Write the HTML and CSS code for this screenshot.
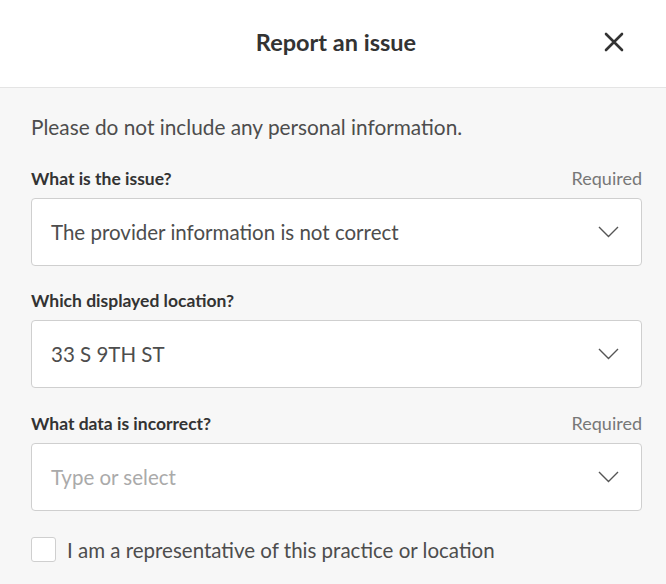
FILE: index.html
```html
<!DOCTYPE html>
<html lang="en">
<head>
  <meta charset="UTF-8">
  <meta name="viewport" content="width=device-width, initial-scale=1.0">
  <title>Report an issue</title>
  <link rel="stylesheet" href="styles.css">
</head>
<body>
  <div class="modal">
    <!-- Cabeçalho -->
    <header class="modal-header">
      <span></span>
      <h1 class="modal-title">Report an issue</h1>
      <button class="close-btn" aria-label="Close">
        <svg width="20" height="20" viewBox="0 0 20 20">
          <path d="M2 2 L18 18 M18 2 L2 18" stroke="#333" stroke-width="2.6" stroke-linecap="round" fill="none"/>
        </svg>
      </button>
    </header>

    <form class="modal-body">
      <p class="intro">Please do not include any personal information.</p>

      <div class="field">
        <div class="field-label">
          <label>What is the issue?</label>
          <span class="required">Required</span>
        </div>
        <div class="select-box">
          <span class="select-value">The provider information is not correct</span>
          <svg class="chevron" width="21" height="12" viewBox="0 0 21 12">
            <path d="M1 1 L10.5 10.5 L20 1" stroke="#555" stroke-width="1.4" fill="none"/>
          </svg>
        </div>
      </div>

      <div class="field">
        <div class="field-label">
          <label>Which displayed location?</label>
        </div>
        <div class="select-box">
          <span class="select-value">33 S 9TH ST</span>
          <svg class="chevron" width="21" height="12" viewBox="0 0 21 12">
            <path d="M1 1 L10.5 10.5 L20 1" stroke="#555" stroke-width="1.4" fill="none"/>
          </svg>
        </div>
      </div>

      <div class="field">
        <div class="field-label">
          <label>What data is incorrect?</label>
          <span class="required">Required</span>
        </div>
        <div class="select-box">
          <span class="select-value placeholder">Type or select</span>
          <svg class="chevron" width="21" height="12" viewBox="0 0 21 12">
            <path d="M1 1 L10.5 10.5 L20 1" stroke="#555" stroke-width="1.4" fill="none"/>
          </svg>
        </div>
      </div>

      <label class="check-row">
        <span class="checkbox"></span>
        <span>I am a representative of this practice or location</span>
      </label>
    </form>
  </div>
</body>
</html>
```

FILE: styles.css
```css
* {
  margin: 0;
  padding: 0;
  box-sizing: border-box;
}

body {
  font-family: Lato, "Liberation Sans", sans-serif;
  background-color: #f7f7f7;
  color: #4d4d4d;
}

.modal {
  min-height: 100vh;
  display: flex;
  flex-direction: column;
}

.modal-header {
  height: 88px;
  background-color: #fff;
  border-bottom: 1px solid #e4e4e4;
  display: grid;
  grid-template-columns: 1fr auto 1fr;
  align-items: center;
  padding: 0 42px;
}

.modal-title {
  font-size: 23.5px;
  font-weight: 700;
  color: #333;
  padding-left: 6px;
  margin-top: -4px;
}

.close-btn {
  justify-self: end;
  background: none;
  border: none;
  cursor: pointer;
  display: flex;
  margin-top: -4px;
}

.modal-body {
  padding: 26px 24px 0 31px;
}

.intro {
  font-size: 20.8px;
  line-height: 26px;
  margin-bottom: 28px;
}

.field {
  margin-bottom: 25px;
}

.field-label {
  display: flex;
  justify-content: space-between;
  align-items: baseline;
  margin-bottom: 9px;
  line-height: 20px;
}

.field-label label {
  font-size: 17.5px;
  font-weight: 700;
  color: #333;
}

.required {
  font-size: 18px;
  color: #777;
}

.select-box {
  height: 68px;
  background-color: #fff;
  border: 1px solid #cfcfcf;
  border-radius: 4px;
  display: flex;
  align-items: center;
  justify-content: space-between;
  padding: 0 22px 0 19px;
}

.select-value {
  font-size: 20.5px;
  color: #4d4d4d;
}

.select-value.placeholder {
  color: #aaa;
}

.check-row {
  display: flex;
  align-items: center;
  gap: 11px;
  font-size: 20.5px;
  margin-top: 26px;
}

.checkbox {
  width: 25px;
  height: 25px;
  background-color: #fff;
  border: 1px solid #cfcfcf;
  border-radius: 3px;
}
```
